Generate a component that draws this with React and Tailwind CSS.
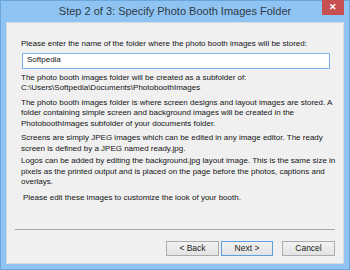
import React from "react";

const font = { fontFamily: '"Liberation Sans", Arial, sans-serif' };

function WizButton({ children, primary }) {
  return (
    <button
      type="button"
      className={
        primary
          ? "h-[15px] w-[52px] border border-[#5c9ede] bg-gradient-to-b from-[#f2f2f2] to-[#e3e3e3] text-[8.5px] leading-none text-[#222]"
          : "h-[15px] w-[53px] border border-[#acacac] bg-gradient-to-b from-[#f2f2f2] to-[#e3e3e3] text-[8.5px] leading-none text-[#222]"
      }
    >
      {children}
    </button>
  );
}

export default function App() {
  return (
    <div
      className="relative flex h-[270px] w-[350px] flex-col border border-[#6aa6de] bg-[#8fc4f2]"
      style={font}
    >
      {/* Title bar */}
      <div className="relative flex h-[21px] shrink-0 items-center justify-center">
        <span className="text-[11px] text-[#2f3a45]">
          Step 2 of 3: Specify Photo Booth Images Folder
        </span>
        <div className="absolute right-[5px] top-[-1px] flex h-[15px] w-[22px] items-center justify-center bg-[#c75050] text-[9px] font-bold text-white">
          ✕
        </div>
      </div>

      {/* Client area */}
      <div className="relative mx-[5px] mb-[5px] flex-1 border border-[#d2dae2] bg-[#f0f0f0] text-[8px] leading-[10.5px] text-[#141414]">
        <div className="whitespace-nowrap pl-[14px] pt-[16px]">
          <p>Please enter the name of the folder where the photo booth images will be stored:</p>
          <div className="ml-px mt-[3px] flex h-[16px] w-[308px] items-center border border-[#7eb4ea] bg-white pl-[4px]">
            Softpedia
          </div>
          <p className="mt-[4px]">
            The photo booth images folder will be created as a subfolder of:
            <br />
            C:\Users\Softpedia\Documents\PhotoboothImages
          </p>
          <p className="mt-[4px]">
            The photo booth images folder is where screen designs and layout images are stored. A
            <br />
            folder containing simple screen and background images will be created in the
            <br />
            PhotoboothImages subfolder of your documents folder.
          </p>
          <p className="mt-[4px]">
            Screens are simply JPEG images which can be edited in any image editor. The ready
            <br />
            screen is defined by a JPEG named ready.jpg.
          </p>
          <p className="mt-[2px]">
            Logos can be added by editing the background.jpg layout image. This is the same size in
            <br />
            pixels as the printed output and is placed on the page before the photos, captions and
            <br />
            overlays.
          </p>
          <p className="ml-[2px] mt-[5px]">Please edit these images to customize the look of your booth.</p>
        </div>

        <div className="absolute bottom-[33px] left-[8px] right-[8px] border-t border-[#a8a8a8]" />

        <div className="absolute bottom-[7px] right-[8px] flex">
          <WizButton>&lt; Back</WizButton>
          <div className="ml-[2px]">
            <WizButton primary>Next &gt;</WizButton>
          </div>
          <div className="ml-[9px]">
            <WizButton>Cancel</WizButton>
          </div>
        </div>
      </div>
    </div>
  );
}
